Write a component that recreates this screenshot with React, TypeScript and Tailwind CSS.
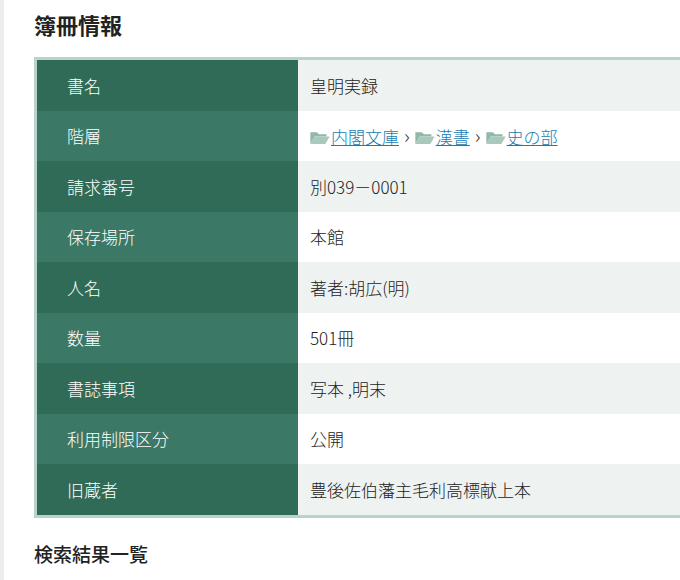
const rows: [string, React.ReactNode][] = [
  ["書名", "皇明実録"],
  ["階層", "PATH"],
  ["請求番号", "別039－0001"],
  ["保存場所", "本館"],
  ["人名", "著者:胡広(明)"],
  ["数量", "501冊"],
  ["書誌事項", "写本 ,明末"],
  ["利用制限区分", "公開"],
  ["旧蔵者", "豊後佐伯藩主毛利高標献上本"],
];

const Folder = () => (
  <svg width="20" height="15" viewBox="0 0 18 14" className="inline-block mr-[1px] -mt-[3px]">
    <path d="M0 2h6l2 2h7v2H4L0 13z" fill="#8fb8a8" />
    <path d="M4 6h14l-4 7H0z" fill="#a9c9bc" />
  </svg>
);

const Path = () => {
  const parts = ["内閣文庫", "漢書", "史の部"];
  return (
    <span>
      {parts.map((p, i) => (
        <span key={p}>
          <Folder />
          <a href="#" className="text-[#1a7bb0] underline">{p}</a>
          {i < parts.length - 1 && <span className="mx-[5px] text-[#333] text-[20px]">›</span>}
        </span>
      ))}
    </span>
  );
};

export default function App() {
  return (
    <div className="w-[680px] h-[580px] overflow-hidden bg-white border-l-[4px] border-[#ececec] pl-[30px] text-[#222]" style={{ fontFamily: '"Noto Sans CJK JP", "Noto Sans", sans-serif' }}>
      <h2 className="pt-[7px] text-[22px] font-semibold leading-[34px]">簿冊情報</h2>
      <div className="mt-[16px] w-[680px] border-[3px] border-[#b8d4ca]">
        {rows.map(([k, v], i) => (
          <div key={k} className="flex h-[50.5px] text-[17px] font-light">
            <div className={`w-[261px] flex items-center pl-[30px] text-white ${i % 2 ? "bg-[#3b7866]" : "bg-[#2f6b57]"}`}>{k}</div>
            <div className={`flex-1 flex items-center pl-[12px] ${i % 2 ? "bg-white" : "bg-[#eef2f1]"}`}>
              {v === "PATH" ? <Path /> : v}
            </div>
          </div>
        ))}
      </div>
      <h3 className="mt-[22px] text-[19px] font-medium">検索結果一覧</h3>
    </div>
  );
}
